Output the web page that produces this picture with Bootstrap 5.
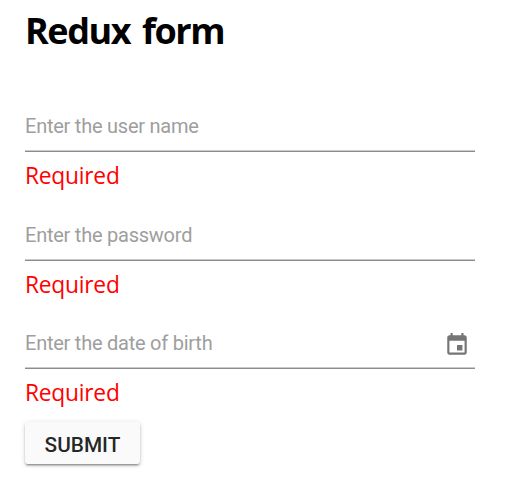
<!DOCTYPE html>
<html lang="en">
<head>
<meta charset="utf-8">
<meta name="viewport" content="width=device-width, initial-scale=1">
<title>Redux form</title>
<link href="https://cdn.jsdelivr.net/npm/bootstrap@5.3.0/dist/css/bootstrap.min.css" rel="stylesheet">
<style>
body{font-family:"Open Sans","Noto Sans",sans-serif;color:#000;background:#fff;min-height:100vh}
.form-shell{width:450px;margin-left:25px;padding-top:8px}
.page-title{font-size:36px;line-height:46px;font-weight:700;letter-spacing:-1.45px;word-spacing:4px;margin-bottom:51px}
.field{height:108.5px}
.line-box{height:47px;border-bottom:1px solid #8c8c8c;box-shadow:inset 0 -1px #cacaca}
.line-input{height:42px;font:400 20px/24px Roboto,sans-serif;letter-spacing:-.24px;color:#000;outline:0}
.line-input::placeholder{color:#9e9e9e;opacity:1}
.calendar{margin:10px 5px 0 0}
.error-text{font-size:22.8px;line-height:30px;font-weight:400;letter-spacing:-.25px;color:#f00;margin-top:9px}
.submit-btn{width:115px;height:42px;margin-top:-9px;padding:5px 0 0;font:500 20.8px/24px Roboto,sans-serif;background:#fafafa;border-radius:3px;color:rgba(0,0,0,.87);box-shadow:0 3px 1px -2px rgba(0,0,0,.2),0 2px 2px rgba(0,0,0,.2),0 1px 5px rgba(0,0,0,.16)}
</style>
<script src="https://cdn.jsdelivr.net/npm/bootstrap@5.3.0/dist/js/bootstrap.bundle.min.js"></script>
</head>
<body>
<main class="form-shell">
<h1 class="page-title">Redux form</h1>
<form>
<div class="field"><div class="line-box"><input class="line-input w-100 border-0 bg-transparent p-0" placeholder="Enter the user name"></div><div class="error-text">Required</div></div>
<div class="field"><div class="line-box"><input type="password" class="line-input w-100 border-0 bg-transparent p-0" placeholder="Enter the password"></div><div class="error-text">Required</div></div>
<div class="field"><div class="line-box d-flex align-items-start"><input class="line-input border-0 flex-grow-1 bg-transparent p-0" placeholder="Enter the date of birth"><svg width="26" height="26" viewBox="0 0 24 24" fill="#757575" class="flex-shrink-0 calendar"><path d="M17 12h-5v5h5v-5zM16 1v2H8V1H6v2H5c-1.11 0-1.99.9-1.99 2L3 19c0 1.1.89 2 2 2h14c1.1 0 2-.9 2-2V5c0-1.1-.9-2-2-2h-1V1h-2zm3 18H5V8h14v11z"/></svg></div><div class="error-text">Required</div></div>
<button type="button" class="btn submit-btn border-0">SUBMIT</button>
</form>
</main>
</body>
</html>
